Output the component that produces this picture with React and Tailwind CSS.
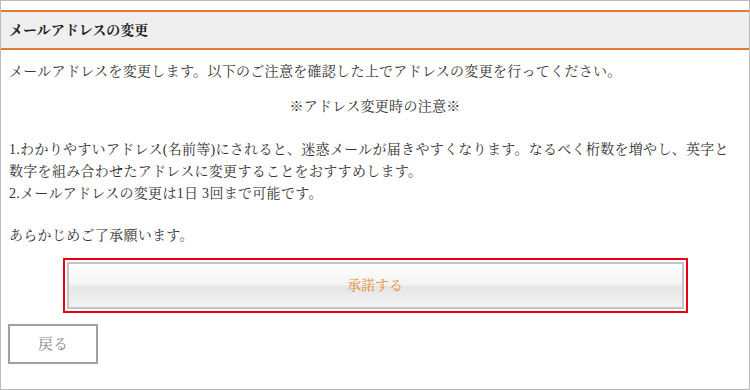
import React from "react";

const serif = "font-['Liberation_Serif','Noto_Serif_CJK_JP','Noto_Sans_CJK_JP',serif]";

export default function App() {
  return (
    <div className={`w-[750px] h-[390px] bg-white text-[#333] ${serif}`}>
      <div className="h-full border border-[#bbb] pt-[9px] flex flex-col">
        {/* 見出し */}
        <div className="h-[40px] border-y-2 border-[#e07a35] bg-[#efefef] px-[8px] flex items-center">
          <h2 className="text-[14px] font-bold text-[#222]">メールアドレスの変更</h2>
        </div>

        <div className="px-[8px] text-[14px] leading-[22px] tracking-[0.3px]">
          <p className="mt-[11px]">
            メールアドレスを変更します。以下のご注意を確認した上でアドレスの変更を行ってください。
          </p>
          <p className="mt-[13px] text-center">※アドレス変更時の注意※</p>
          <p className="mt-[21px]">
            1.わかりやすいアドレス(名前等)にされると、迷惑メールが届きやすくなります。なるべく桁数を増やし、英字と数字を組み合わせたアドレスに変更することをおすすめします。
            <br />
            2.メールアドレスの変更は1日 3回まで可能です。
          </p>
          <p className="mt-[20px]">あらかじめご了承願います。</p>
        </div>

        <div className="mt-[11px] flex justify-center">
          <div className="w-[625px] h-[55px] border-2 border-[#e60012] p-[2px]">
            <button className="w-full h-full border-2 border-[#c4c4c4] bg-[linear-gradient(to_bottom,#ffffff_0%,#f3f3f3_48%,#e6e6e6_52%,#f2f2f2_100%)] text-[14px] text-[#e8913a] flex items-center justify-center">
              承諾する
            </button>
          </div>
        </div>

        <div className="mt-[11px] px-[7px]">
          <button className="w-[90px] h-[40px] border-2 border-[#a0a0a0] bg-white text-[15px] text-[#888] flex items-center justify-center">
            戻る
          </button>
        </div>
      </div>
    </div>
  );
}
